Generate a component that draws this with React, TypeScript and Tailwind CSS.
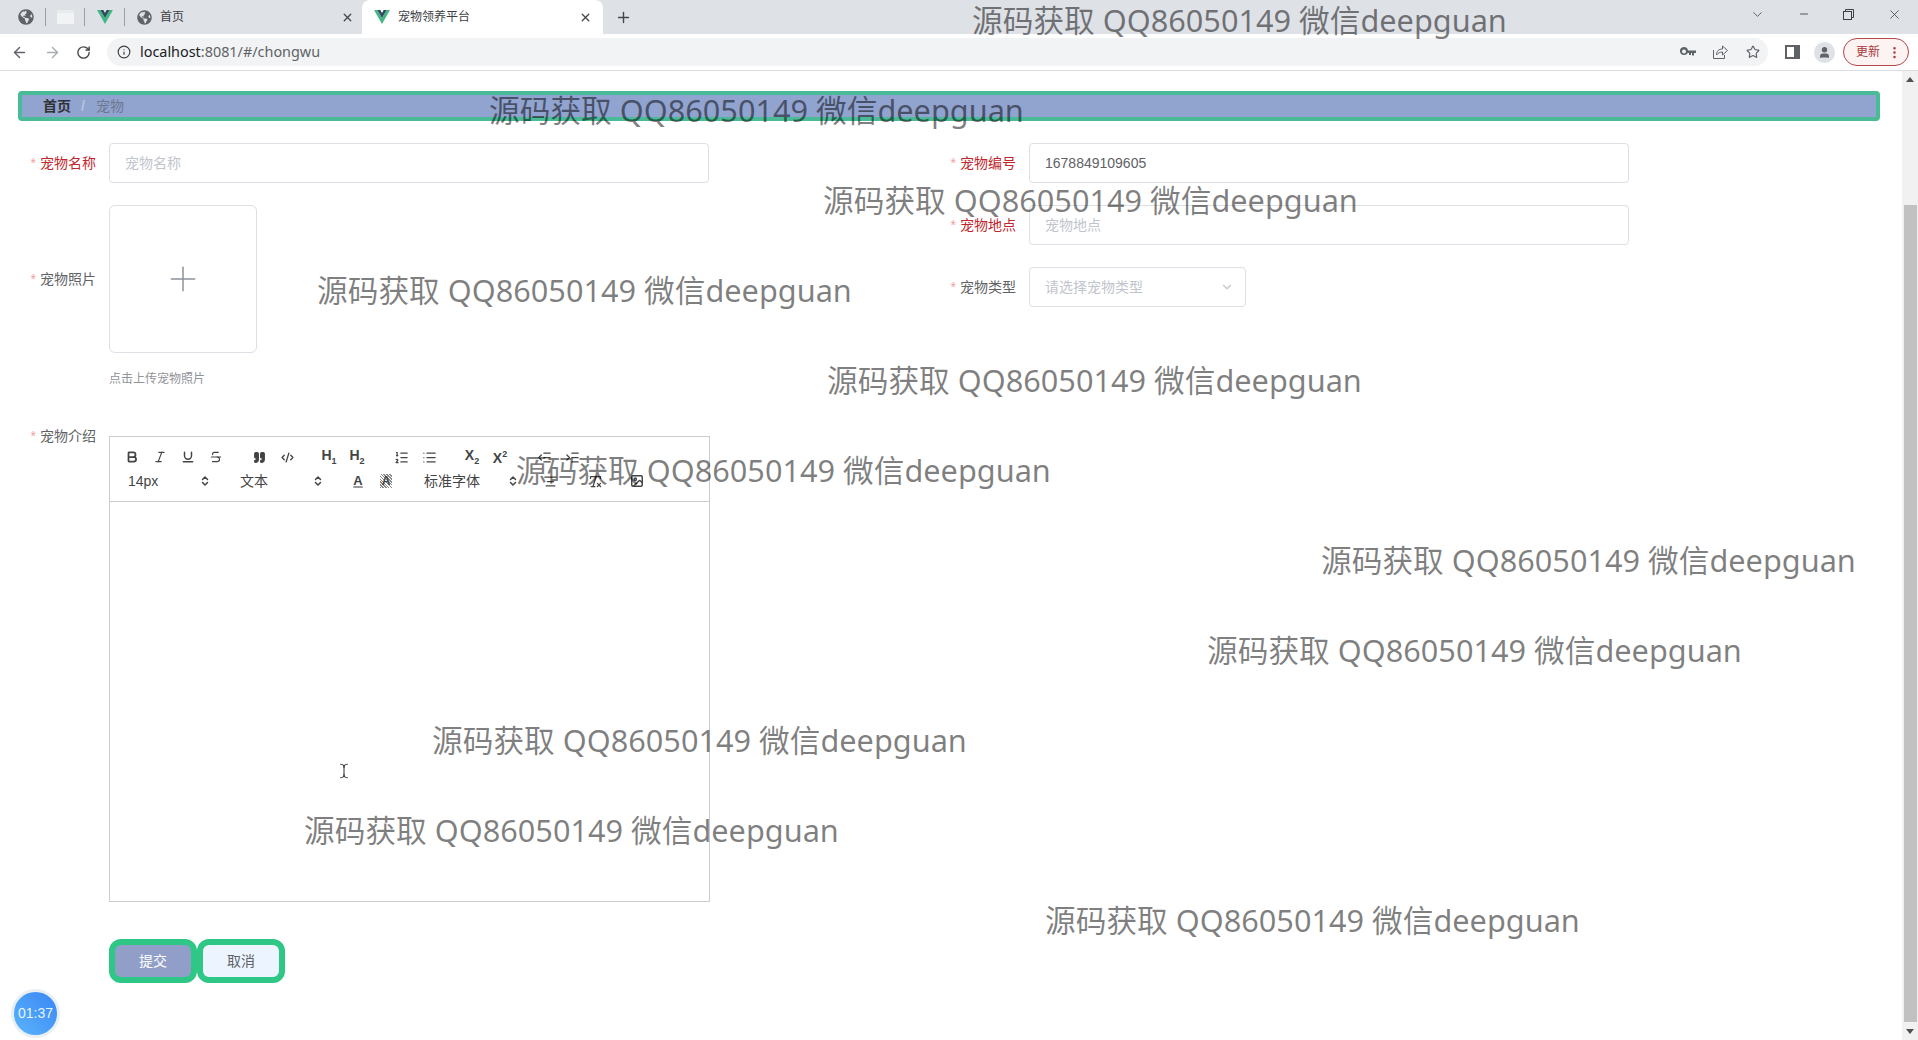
import React from "react";
import { FaGlobeAmericas } from "react-icons/fa";
import { ArrowLeft, ArrowRight, RotateCw, Info, Star, X, Plus, ChevronDown, Minus, ChevronsUpDown, Image, RemoveFormatting, User, EllipsisVertical, Bold, Italic, Underline, Strikethrough, CodeXml, List, ListOrdered, Indent, Outdent, Quote, AlignCenter, TextCursor } from "lucide-react";

const font = "font-['Liberation_Sans','Noto_Sans_CJK_SC',sans-serif]";

const watermarks = [
  "left-[972px] top-[0px]",
  "left-[489px] top-[90px]",
  "left-[823px] top-[180px]",
  "left-[317px] top-[270px]",
  "left-[827px] top-[360px]",
  "left-[516px] top-[450px]",
  "left-[1321px] top-[540px]",
  "left-[1207px] top-[630px]",
  "left-[432px] top-[720px]",
  "left-[304px] top-[810px]",
  "left-[1045px] top-[900px]",
];

function VueLogo() {
  return (
    <svg width={16} height={14} viewBox="0 0 24 21">
      <path d="M0 0h5l7 12 7-12h5L12 21z" fill="#41b883" />
      <path d="M5 0h4.500L12 4.500 14.500 0H19l-7 12z" fill="#35495e" />
    </svg>
  );
}

function Label({ text, red }: { text: string; red?: boolean }) {
  return (
    <div className={`w-[66px] shrink-0 text-right text-[14px] whitespace-nowrap ${red ? "text-[#c0272d]" : "text-[#606266]"}`}>
      <span className="text-[#f2a0a0] mr-1">*</span>
      {text}
    </div>
  );
}

function TextField({ value, placeholder }: { value?: string; placeholder?: string }) {
  return (
    <div className={`w-[600px] h-10 ml-[13px] border border-[#dcdfe6] rounded flex items-center px-[15px] text-[14px] ${value ? "text-[#606266]" : "text-[#c0c4cc]"}`}>
      {value || placeholder}
    </div>
  );
}

function Tool({ children, className = "" }: { children: React.ReactNode; className?: string }) {
  return <span className={`flex w-[28px] justify-center text-[#444] ${className}`}>{children}</span>;
}

function Picker({ text, w }: { text: string; w: string }) {
  return (
    <span className={`flex items-center justify-between text-[14px] text-[#444] pl-[10px] ${w}`}>
      {text}
      <ChevronsUpDown size={12} strokeWidth={3} className="text-[#444]" />
    </span>
  );
}

function Script({ base, sub, top }: { base: string; sub: string; top?: boolean }) {
  return (
    <span className="font-bold text-[14px] leading-none">
      {base}
      <span className={`text-[9px] ${top ? "align-super" : "align-sub"}`}>{sub}</span>
    </span>
  );
}

export default function App() {
  return (
    <div className={`relative w-[1918px] h-[1040px] overflow-hidden bg-white ${font}`}>
      {/* browser tabs */}
      <div className="h-[34px] bg-[#dee1e6] flex items-center text-[12px] text-[#3c4043]">
        <div className="w-[137px] pl-[18px] flex items-center">
          <FaGlobeAmericas size={16} className="text-[#5f6368]" />
          <span className="ml-[11px] w-px h-[18px] bg-[#9aa0a6]" />
          <span className="ml-[11px] w-[17px] h-[14px] bg-[#f1f3f4] border-t-[3px] border-[#e8eaed]" />
          <span className="ml-[10px] w-px h-[18px] bg-[#9aa0a6]" />
          <span className="ml-[12px] flex"><VueLogo /></span>
          <span className="ml-[11px] w-px h-[18px] bg-[#9aa0a6]" />
        </div>
        <div className="w-[225px] flex items-center pr-[8px]">
          <FaGlobeAmericas size={15} className="text-[#5f6368]" />
          <span className="ml-[8px]">首页</span>
          <X size={13} strokeWidth={2.5} className="ml-auto text-[#45484c]" />
        </div>
        <div className="w-[241px] h-[34px] bg-white rounded-t-lg flex items-center pl-3 pr-[11px]">
          <VueLogo />
          <span className="ml-[8px]">宠物领养平台</span>
          <X size={13} strokeWidth={2.5} className="ml-auto text-[#45484c]" />
        </div>
        <Plus size={17} strokeWidth={2} className="ml-[12px] text-[#45484c]" />
        <div className="ml-auto flex items-center text-[#3c4043] mb-[6px]">
          <ChevronDown size={15} strokeWidth={1.25} className="mr-[33px]" />
          <Minus size={12} strokeWidth={1.75} className="mr-[33px]" />
          <svg width={11} height={11} viewBox="0 0 11 11" fill="none" stroke="#3c4043" className="mr-[33px]">
            <rect x="0.500" y="2.500" width="8" height="8" />
            <path d="M2.500 2.500v-2h8v8h-2" />
          </svg>
          <X size={15} strokeWidth={1.25} className="mr-[16px]" />
        </div>
      </div>

      {/* address bar */}
      <div className="h-[37px] bg-white border-b border-[#dadce0] flex items-center pl-[11px]">
        <ArrowLeft size={17} className="text-[#5f6368]" />
        <ArrowRight size={17} className="ml-[16px] text-[#a9acb0]" />
        <RotateCw size={15} strokeWidth={2.25} className="ml-[15px] text-[#45484c]" />
        <div className="ml-[16px] h-[28px] w-[1661px] bg-[#f1f3f4] rounded-full flex items-center pl-[10px] text-[14.4px] text-[#5f6368] font-['Noto_Sans',sans-serif]">
          <Info size={14} className="text-[#3c4043]" />
          <span className="ml-[9px]">
            <span className="text-[#202124]">localhost</span>:8081/#/chongwu
          </span>
          <span className="ml-auto flex items-center text-[#5f6368]">
            <svg width={16} height={10} viewBox="0 0 16 10" className="mr-[16px]" fill="#5f6368">
              <path d="M4 0a4 4 0 1 1-3.900 5H0V5a4 4 0 0 1 4-5zm0 2.500a2 2 0 1 0 0 4 2 2 0 0 0 0-4z" />
              <path d="M7 3.500h9v2.500h-2v2.500h-2V6h-1v2H9V6H7z" />
            </svg>
            <svg width={16} height={16} viewBox="0 0 16 16" className="mr-[18px]" fill="none" stroke="#5f6368">
              <path d="M1.500 6v8.500h11V11" />
              <path d="M4.500 11c0-4 2.500-6 6-6V2l5 4.500-5 4.500V8c-2.500 0-4.500 1-6 3z" />
            </svg>
            <Star size={14} strokeWidth={2} className="mr-[8px]" />
          </span>
        </div>
        <span className="ml-[17px] w-[15px] h-[14px] border-[2px] border-r-[6px] border-[#5f6368]" />
        <span className="ml-[14px] w-[21px] h-[21px] rounded-full bg-[#dee1e6] flex items-center justify-center">
          <User size={13} fill="#5f6368" className="text-[#5f6368]" />
        </span>
        <span className="ml-[8px] w-[66px] h-[28px] rounded-full border border-[#b3474a] bg-[#fdf3f2] flex items-center pl-[12px] text-[12px] text-[#a8393d]">
          更新
          <EllipsisVertical size={15} className="ml-[7px]" />
        </span>
      </div>

      {/* page */}
      <div className="flex h-[969px]">
        <div className="flex-1 pt-[20px] pl-[18px] pr-[22px] min-w-0">
          <div className="h-[30px] bg-[#91a3cf] border-[4px] border-[#4abb97] rounded flex items-center pl-[21px] text-[14px]">
            <span className="font-bold text-[#303133]">首页</span>
            <span className="ml-[10px] mr-[11px] text-[#b8c4dc] font-bold">/</span>
            <span className="text-[#6b7890]">宠物</span>
          </div>

          <div className="flex mt-[22px]">
            {/* left column */}
            <div className="w-[932px] shrink-0 pl-[12px]">
              <div className="flex items-center">
                <Label text="宠物名称" red />
                <TextField placeholder="宠物名称" />
              </div>
              <div className="flex items-center mt-[22px]">
                <Label text="宠物照片" />
                <div className="ml-[13px] w-[148px] h-[148px] border border-[#dcdfe6] rounded-md flex items-center justify-center">
                  <Plus size={40} strokeWidth={0.9} className="text-[#8c939d]" />
                </div>
              </div>
              <div className="ml-[79px] mt-[18px] text-[12px] leading-4 text-[#909399]">点击上传宠物照片</div>

              <div className="flex mt-[49px]">
                <div className="mt-[-10px]"><Label text="宠物介绍" /></div>
                <div className="ml-[13px] w-[601px] h-[466px] border border-[#ccc] flex flex-col">
                  <div className="h-[65px] border-b border-[#ccc] pl-[8px] pt-[10px] overflow-hidden shrink-0">
                    <div className="flex items-center h-[20px]">
                      <Tool><Bold size={14} strokeWidth={3} /></Tool>
                      <Tool><Italic size={14} /></Tool>
                      <Tool><Underline size={14} strokeWidth={2.5} /></Tool>
                      <Tool><Strikethrough size={14} /></Tool>
                      <Tool className="ml-[15px]"><Quote size={13} fill="#444" /></Tool>
                      <Tool><CodeXml size={13} strokeWidth={2.5} /></Tool>
                      <Tool className="ml-[14px]"><Script base="H" sub="1" /></Tool>
                      <Tool><Script base="H" sub="2" /></Tool>
                      <Tool className="ml-[16px]"><ListOrdered size={15} /></Tool>
                      <Tool><List size={15} /></Tool>
                      <Tool className="ml-[15px]"><Script base="X" sub="2" /></Tool>
                      <Tool><Script base="X" sub="2" top /></Tool>
                      <Tool className="ml-[16px]"><Outdent size={15} /></Tool>
                      <Tool><Indent size={15} /></Tool>
                    </div>
                    <div className="flex items-center h-[20px] mt-[4px]">
                      <Picker text="14px" w="w-[93px]" />
                      <Picker text="文本" w="w-[94px] ml-[19px]" />
                      <Tool className="ml-[20px] text-[13px] font-bold underline decoration-2 decoration-[#999]">A</Tool>
                      <Tool className="text-[12px] font-bold">
                        <span className="bg-[repeating-linear-gradient(45deg,#888_0,#888_1px,#fff_1px,#fff_2px)] px-[2px] leading-[14px]">A</span>
                      </Tool>
                      <Picker text="标准字体" w="w-[105px] ml-[14px]" />
                      <Tool className="ml-[17px]"><AlignCenter size={15} /></Tool>
                      <Tool className="ml-[17px]"><RemoveFormatting size={15} /></Tool>
                      <Tool className="ml-[14px]"><Image size={14} strokeWidth={2.5} /></Tool>
                    </div>
                  </div>
                  <div className="flex-1 relative">
                    <TextCursor size={16} strokeWidth={1.5} className="absolute left-[226px] top-[261px] text-[#333]" />
                  </div>
                </div>
              </div>

              <div className="flex ml-[79px] mt-[37px]">
                <div className="w-[88px] h-[44px] bg-[#919fc8] border-[6px] border-[#2ec785] rounded-xl flex items-center justify-center text-[14px] text-white">提交</div>
                <div className="w-[88px] h-[44px] bg-[#ecf5ff] border-[6px] border-[#2ec785] rounded-xl flex items-center justify-center text-[14px] text-[#606266]">取消</div>
              </div>
            </div>

            {/* right column */}
            <div className="flex-1">
              <div className="flex items-center">
                <Label text="宠物编号" red />
                <TextField value="1678849109605" />
              </div>
              <div className="flex items-center mt-[22px]">
                <Label text="宠物地点" red />
                <TextField placeholder="宠物地点" />
              </div>
              <div className="flex items-center mt-[22px]">
                <Label text="宠物类型" />
                <div className="ml-[13px] w-[217px] h-10 border border-[#dcdfe6] rounded flex items-center justify-between px-[15px] text-[14px] text-[#c0c4cc]">
                  请选择宠物类型
                  <ChevronDown size={14} className="mr-[-4px]" />
                </div>
              </div>
            </div>
          </div>
        </div>

        {/* scrollbar */}
        <div className="w-[16px] bg-[#f1f1f1] shrink-0 flex flex-col items-center">
          <div className="h-[17px] w-full flex items-center justify-center">
            <span className="w-0 h-0 border-x-[4px] border-x-transparent border-b-[5px] border-b-[#505050]" />
          </div>
          <div className="h-[117px] w-full" />
          <div className="flex-1 w-[13px] bg-[#c1c1c1]" />
          <div className="h-[18px] w-full flex items-center justify-center">
            <span className="w-0 h-0 border-x-[4px] border-x-transparent border-t-[5px] border-t-[#505050]" />
          </div>
        </div>
      </div>

      {/* recording timer */}
      <div className="absolute left-[11px] top-[989px] w-[49px] h-[49px] rounded-full border-[3px] border-[#e8f0f5] bg-gradient-to-bl from-[#3a85f5] to-[#5cb5fa] flex items-center justify-center text-[14px] text-[#e6f5ff]">
        01:37
      </div>

      {/* watermarks */}
      {watermarks.map((pos) => (
        <div key={pos} className={`absolute ${pos} text-[30.7px] leading-[40px] whitespace-nowrap text-black/50 font-['Noto_Sans','Noto_Sans_CJK_SC',sans-serif] pointer-events-none`}>
          源码获取 QQ86050149 微信deepguan
        </div>
      ))}
    </div>
  );
}
